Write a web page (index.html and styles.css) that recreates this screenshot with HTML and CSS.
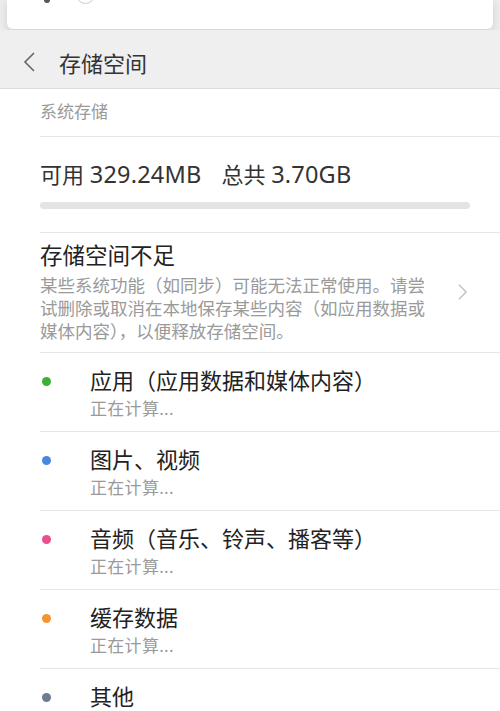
FILE: index.html
```html
<!DOCTYPE html>
<html lang="zh-CN">
<head>
    <meta charset="UTF-8">
    <meta name="viewport" content="width=device-width, initial-scale=1.0">
    <title>存储空间</title>
    <link rel="stylesheet" href="styles.css">
</head>
<body>
    <!-- Notification card (cut off at the top) -->
    <div class="top-area">
        <div class="notice-card">
            <span class="notice-dot"></span>
            <span class="notice-ring"></span>
        </div>
    </div>

    <!-- Title bar -->
    <header class="titlebar">
        <svg class="back" width="14" height="24" viewBox="0 0 14 24">
            <path d="M12 3 L3 12 L12 21" fill="none" stroke="#666" stroke-width="1.6"/>
        </svg>
        <h1>存储空间</h1>
    </header>

    <main class="content">
        <div class="section-label">系统存储</div>

        <div class="usage">
            <div class="usage-text">可用 <span class="num">329.24MB</span><span class="gap"></span>总共 <span class="num">3.70GB</span></div>
            <div class="bar"><div class="bar-fill" style="width: 0%"></div></div>
        </div>

        <div class="warning">
            <div class="warning-text">
                <div class="warning-title">存储空间不足</div>
                <div class="warning-desc">某些系统功能（如同步）可能无法正常使用。请尝试删除或取消在本地保存某些内容（如应用数据或媒体内容），以便释放存储空间。</div>
            </div>
            <svg class="chevron" width="12" height="22" viewBox="0 0 12 22">
                <path d="M2 3 L10 11 L2 19" fill="none" stroke="#bbb" stroke-width="1.4"/>
            </svg>
        </div>

        <ul class="categories">
            <li>
                <span class="dot green"></span>
                <div>
                    <div class="cat-title">应用（应用数据和媒体内容）</div>
                    <div class="cat-sub">正在计算...</div>
                </div>
            </li>
            <li>
                <span class="dot blue"></span>
                <div>
                    <div class="cat-title">图片、视频</div>
                    <div class="cat-sub">正在计算...</div>
                </div>
            </li>
            <li>
                <span class="dot pink"></span>
                <div>
                    <div class="cat-title">音频（音乐、铃声、播客等）</div>
                    <div class="cat-sub">正在计算...</div>
                </div>
            </li>
            <li>
                <span class="dot orange"></span>
                <div>
                    <div class="cat-title">缓存数据</div>
                    <div class="cat-sub">正在计算...</div>
                </div>
            </li>
            <li>
                <span class="dot slate"></span>
                <div>
                    <div class="cat-title">其他</div>
                    <div class="cat-sub">正在计算...</div>
                </div>
            </li>
        </ul>
    </main>
</body>
</html>
```

FILE: styles.css
```css
/* General */
body {
    margin: 0;
    padding: 0;
    font-family: "Noto Sans", "Noto Sans CJK SC", sans-serif;
    background-color: #fff;
    color: #333;
    height: 711px;
    overflow: hidden;
}

/* Top card */
.top-area {
    background-color: #ececec;
    padding: 0 7px;
    height: 30px;
}

.notice-card {
    height: 29px;
    background-color: #fff;
    border-radius: 0 0 6px 6px;
    box-shadow: 0 3px 8px rgba(0, 0, 0, 0.12);
    display: flex;
    align-items: flex-start;
    overflow: hidden;
}

.notice-dot {
    width: 6px;
    height: 6px;
    border-radius: 50%;
    background-color: #555;
    margin: -3px 0 0 37px;
}

.notice-ring {
    width: 17px;
    height: 17px;
    border-radius: 50%;
    border: 1px solid #ccc;
    margin: -15px 0 0 26px;
}

/* Title bar */
.titlebar {
    background-color: #efefef;
    height: 59px;
    display: flex;
    align-items: center;
    padding: 6px 0 0 22px;
    box-sizing: border-box;
    border-bottom: 1px solid #dcdcdc;
}

.titlebar h1 {
    margin: 0 0 0 23px;
    font-size: 22px;
    font-weight: normal;
    color: #333;
}

/* Content */
.content {
    padding-left: 40px;
}

.section-label {
    font-size: 17px;
    color: #9a9a9a;
    height: 47px;
    line-height: 45px;
    border-bottom: 1px solid #e6e6e6;
}

.usage {
    padding-right: 30px;
    border-bottom: 1px solid #e6e6e6;
    height: 95px;
}

.usage-text {
    font-size: 22px;
    line-height: 28px;
    padding-top: 23px;
    color: #333;
}

.usage-text .num {
    font-size: 23.5px;
    letter-spacing: 0.2px;
}

.gap {
    display: inline-block;
    width: 20px;
}

.bar {
    margin-top: 14px;
    height: 7px;
    border-radius: 4px;
    background-color: #e4e4e4;
}

.bar-fill {
    height: 100%;
    background-color: #3cb034;
    border-radius: 4px;
}

/* Warning */
.warning {
    display: flex;
    align-items: center;
    border-bottom: 1px solid #e6e6e6;
    padding: 8px 32px 9px 0;
}

.warning-text {
    flex: 1;
}

.warning-title {
    font-size: 22.5px;
    line-height: 30px;
    margin-bottom: 3px;
    color: #222;
}

.warning-desc {
    font-size: 17.5px;
    line-height: 23px;
    color: #9a9a9a;
    width: 396px;
}

.chevron {
    margin-left: 21px;
}

/* Categories */
.categories {
    list-style-type: none;
    margin: 0;
    padding: 0;
}

.categories li {
    display: flex;
    align-items: flex-start;
    height: 78px;
    border-bottom: 1px solid #e6e6e6;
}

.dot {
    width: 9px;
    height: 9px;
    border-radius: 50%;
    margin: 24px 39px 0 2px;
    flex-shrink: 0;
}

.green { background-color: #3cb034; }
.blue { background-color: #4a88e0; }
.pink { background-color: #e8508c; }
.orange { background-color: #f39435; }
.slate { background-color: #6e7b93; }

.cat-title {
    font-size: 22px;
    line-height: 30px;
    padding-top: 12px;
    margin-bottom: 3px;
    color: #222;
}

.cat-sub {
    font-size: 17px;
    line-height: 22px;
    color: #9a9a9a;
    letter-spacing: 0.3px;
}
```
